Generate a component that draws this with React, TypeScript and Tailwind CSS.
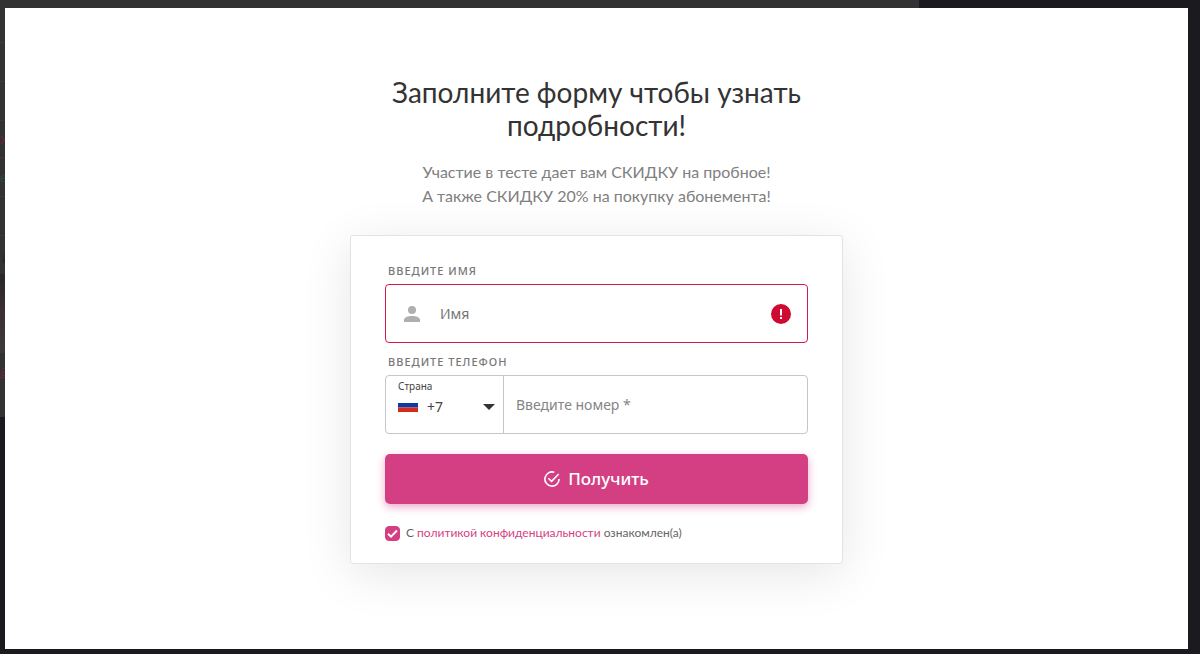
import { useState } from "react";

function PageBehind() {
  return (
    <div aria-hidden="true" className="absolute top-0 left-0 h-[417px] w-[77%] max-w-[919px] overflow-hidden bg-[#333232] font-['Noto_Sans',sans-serif] text-sm">
      <div className="flex w-8 flex-col pt-[42px]">
        <div className="h-[39px] border-t border-[#3d3b3c] pt-2 pl-1 text-[#242424]">s</div>
        <div className="h-[39px] border-t border-[#3d3b3c]" />
        <div className="h-[37px] border-t border-[#582c36] pt-2 text-[#6b2638]">ж</div>
        <div className="h-[39px] border-t border-[#582c36] pt-3 text-xs text-[#2c4744]">ек</div>
        <div className="h-[39px] border-t border-[#582c36]" />
        <div className="h-[39px] border-t border-[#582c36] pt-3 pl-[2px] text-[#262626]">и</div>
        <div className="h-[79px] bg-linear-to-b from-[#292728] via-[#3c3033] to-[#3a3939]" />
        <div className="pt-2 text-[#6b2638] underline">а</div>
      </div>
    </div>
  );
}

function UserIcon() {
  return (
    <svg viewBox="0 0 16 16" className="h-4 w-4" fill="#afafaf" aria-hidden="true">
      <circle cx="8" cy="4" r="4" />
      <path d="M0 16v-2c0-2.7 4-4 8-4s8 1.300 8 4v2z" />
    </svg>
  );
}

function ErrorIcon() {
  return (
    <svg viewBox="0 0 20 20" className="h-5 w-5 shrink-0" role="img" aria-label="!">
      <circle cx="10" cy="10" r="10" fill="#ce0a31" />
      <path d="M9 5h2v6.500H9zM9 13h2v2H9z" fill="#fff" />
    </svg>
  );
}

function CheckCircleIcon() {
  return (
    <svg viewBox="0 0 16 16" className="h-4 w-4" fill="none" stroke="#fff" strokeWidth="1.6" aria-hidden="true">
      <path d="M10.300 1.300A7.100 7.100 0 1 0 15.100 8" />
      <path d="M4.300 7.200 7.600 10.400 14.700 3" />
    </svg>
  );
}

function RussianFlag() {
  return (
    <svg viewBox="0 0 20 14" className="mb-1 h-[14px] w-5" aria-hidden="true">
      <path fill="#fff" d="M0 0h20v5H0z" />
      <path fill="#1039a6" d="M0 5h20v4.500H0z" />
      <path fill="#d52b1e" d="M0 9.500h20v4.500H0z" />
    </svg>
  );
}

const labelClass = "ml-[3px] block text-[11px] leading-4 font-medium tracking-[1px] text-[#777]";

export default function App() {
  const [accepted, setAccepted] = useState(true);

  return (
    <div className="relative flex min-h-screen bg-[#1b1a1f] pt-2 pr-3 pb-[5px] pl-[5px]">
      <PageBehind />
      <main className="relative flex flex-1 flex-col items-center bg-white px-4 pt-[68px] pb-[85px] font-['Noto_Sans',sans-serif]">
        <h1 className="max-w-[460px] text-center font-['Lato',sans-serif] text-[28px] leading-[33px] text-[#333]">
          Заполните форму чтобы узнать подробности!
        </h1>
        <p className="mt-[18px] text-center font-['Lato',sans-serif] text-base leading-6 text-[#808080]">
          Участие в тесте дает вам СКИДКУ на пробное!
          <br />
          А также СКИДКУ 20% на покупку абонемента!
        </p>

        <form
          onSubmit={(e) => e.preventDefault()}
          className="mt-[27px] w-full max-w-[493px] rounded-[3px] border border-[#e3e3e3] bg-white px-[34px] pt-[27px] pb-[21px] shadow-[0_10px_50px_rgba(0,0,0,0.1)]"
        >
          <label htmlFor="name" className={labelClass}>ВВЕДИТЕ ИМЯ</label>
          <div className="mt-[5px] flex h-[59px] items-center rounded-[4px] border border-[#d4194a] pr-4 pl-[18px]">
            <UserIcon />
            <input
              id="name"
              type="text"
              placeholder="Имя"
              className="ml-5 min-w-0 flex-1 text-[14px] text-[#555] outline-none placeholder:text-[#757575]"
            />
            <ErrorIcon />
          </div>

          <label htmlFor="phone" className={`${labelClass} mt-[11px]`}>ВВЕДИТЕ ТЕЛЕФОН</label>
          <div className="mt-[5px] flex h-[59px] rounded-[4px] border border-[#c6c6c6]">
            <div className="flex w-[118px] flex-col border-r border-[#c6c6c6] px-3 pt-[3px]">
              <label htmlFor="country" className="text-[10px] leading-[14px] text-[#444]">Страна</label>
              <div className="mt-[3px] grid items-center">
                <div className="pointer-events-none z-10 col-start-1 row-start-1 flex items-center justify-between">
                  <RussianFlag />
                  <svg viewBox="0 0 12 6" className="-mr-1 h-[6px] w-3" fill="#333" aria-hidden="true">
                    <path d="M0 0h12L6 6z" />
                  </svg>
                </div>
                <select
                  id="country"
                  defaultValue="+7"
                  className="col-start-1 row-start-1 h-[22px] w-full appearance-none bg-transparent pl-[29px] text-sm text-[#444] outline-none"
                >
                  <option>+7</option>
                </select>
              </div>
            </div>
            <input
              id="phone"
              type="tel"
              placeholder="Введите номер *"
              className="min-w-0 flex-1 px-3 text-[14px] text-[#555] outline-none placeholder:text-[#858585]"
            />
          </div>

          <button
            type="submit"
            className="mt-5 flex h-[50px] w-full items-center justify-center gap-2 rounded-[5px] bg-[#d43f84] text-[17px] font-medium text-white shadow-[0_3px_8px_rgba(212,63,132,0.45)]"
          >
            <CheckCircleIcon />
            <span>Получить</span>
          </button>

          <div className="mt-5 flex items-center gap-[6px] font-['Lato',sans-serif] text-xs leading-[18px] text-[#666]">
            <span className="grid h-[15px] w-[15px] shrink-0">
              <input
                id="policy"
                type="checkbox"
                checked={accepted}
                onChange={(e) => setAccepted(e.target.checked)}
                className="col-start-1 row-start-1 h-[15px] w-[15px] appearance-none rounded-[4px] border border-[#d43f84] checked:bg-[#d43f84]"
              />
              {accepted && (
                <svg viewBox="0 0 15 15" className="pointer-events-none z-10 col-start-1 row-start-1 h-[15px] w-[15px]" fill="none" stroke="#fff" strokeWidth="2" aria-hidden="true">
                  <path d="m3 7.800 3 2.900L12 4.500" />
                </svg>
              )}
            </span>
            <label htmlFor="policy">
              С <a href="#policy" className="text-[#d43f84]">политикой конфиденциальности</a> ознакомлен(а)
            </label>
          </div>
        </form>
      </main>
    </div>
  );
}
